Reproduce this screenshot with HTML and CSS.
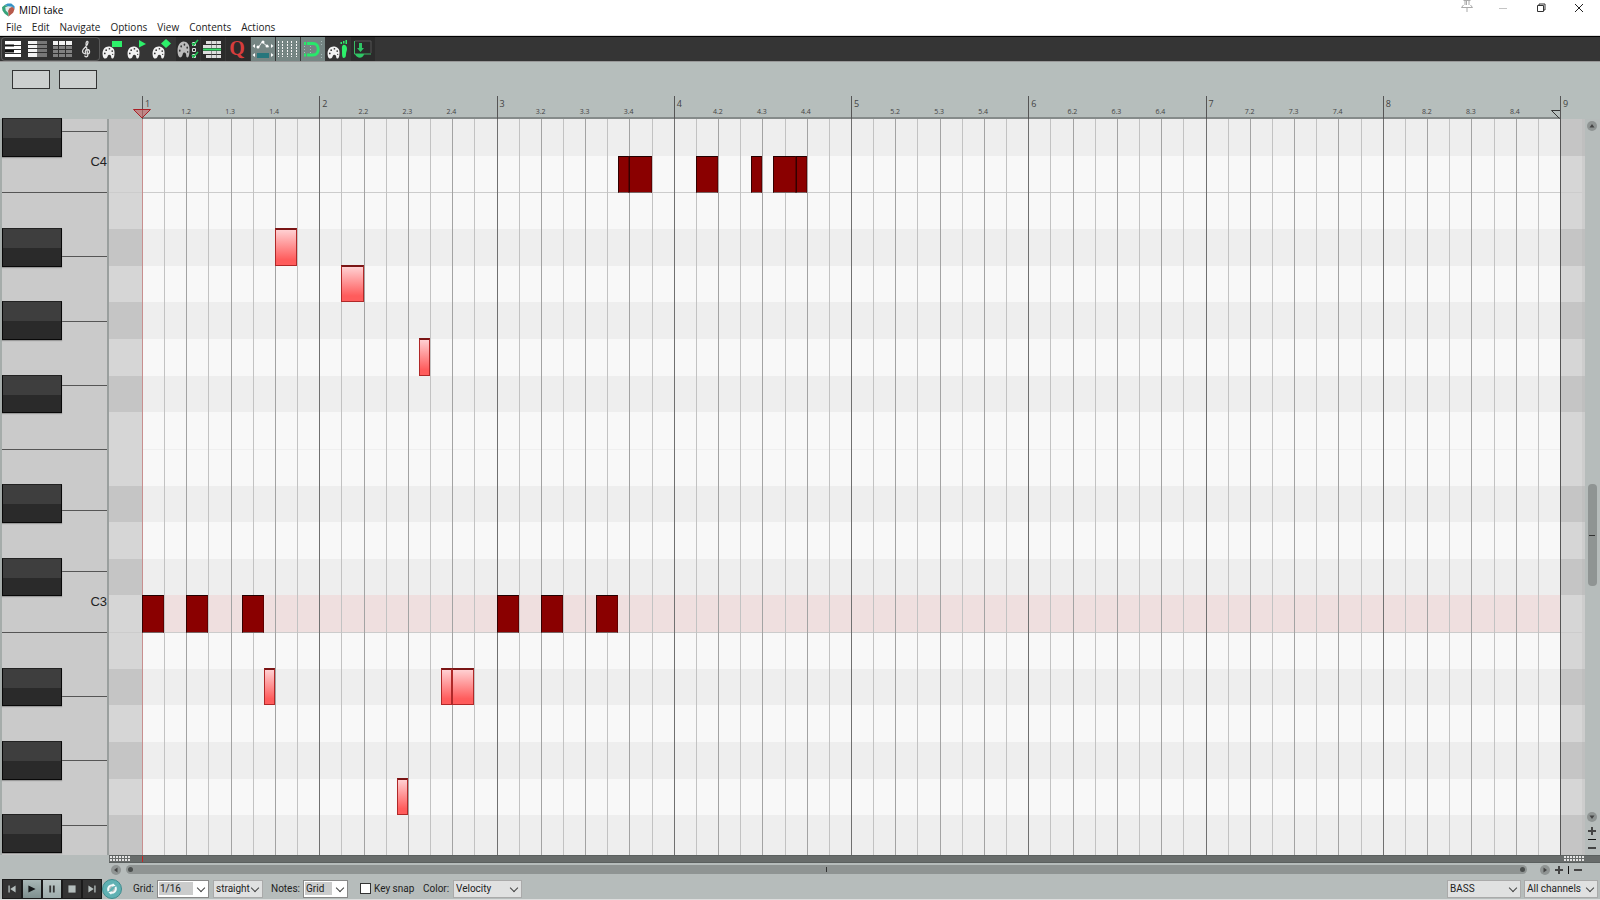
FILE: index.html
```html
<!DOCTYPE html>
<html lang="en">
<head>
<meta charset="utf-8">
<title>MIDI take</title>
<link rel="stylesheet" href="styles.css">
</head>
<body>
<div class="app">
  <header class="titlebar">
    <svg class="logo" viewBox="0 0 14 14"><path d="M.5 3.500L4 .5h6l3.500 3.500-1 5L7 14 2 10z" fill="#dfe9ea"/><path d="M3 1.500L6 0h4l3.500 3v3L11 3.500 6.500 3z" fill="#3593c6"/><path d="M3 1.500L0 4l.5 3.500L3 11l4 3V10.500L4 7.500 3.500 4 6.500 3z" fill="#36a37a"/><path d="M8 5l3-1.500L13.500 6l-1.500 4L7 14v-3.500L6.500 8z" fill="#b75a4c"/></svg>
    <h1 class="title">MIDI take</h1>
    <div class="window-buttons">
      <button class="win-btn pin" aria-label="Pin"><svg width="14" height="14" viewBox="0 0 14 14" fill="none" stroke="#a9a9a9"><path d="M3.500.5h7M5 1v4M6.500 1v4M9 1v4M3.500 5L1.500 7.500h11L10.500 5M7 8v4"/></svg></button>
      <button class="win-btn" aria-label="Minimize"><svg width="10" height="10" viewBox="0 0 10 10" stroke="#c4c4c4"><path d="M1 5.500h8"/></svg></button>
      <button class="win-btn" aria-label="Restore"><svg width="10" height="10" viewBox="0 0 10 10" fill="none" stroke="#333"><path d="M1.500 2.500h6v6h-6zM3 2.500V1h6v6H7.500"/></svg></button>
      <button class="win-btn" aria-label="Close"><svg width="10" height="10" viewBox="0 0 10 10" stroke="#222"><path d="M1 1l8 8M9 1l-8 8"/></svg></button>
    </div>
  </header>
  <nav class="menubar">
    <button>File</button><button>Edit</button><button>Navigate</button><button>Options</button><button>View</button><button>Contents</button><button>Actions</button>
  </nav>

  <svg class="defs" width="0" height="0">
    <symbol id="palette" viewBox="0 0 14 14" preserveAspectRatio="none"><path d="M7 .5C11 .5 13.700 3 13.500 7c0 3-.4 6.500-2.300 6.500-1.700 0-.9-2-1.700-3.200-.9-1.300-2.600-1.100-3.200.2-.5 1.200-.6 3-3 3C1.300 13.500.5 10 .6 7.500.8 3.500 3.500.5 7 .5z" fill="currentColor"/><g fill="#333"><circle cx="3" cy="8" r=".9"/><circle cx="4.500" cy="4.500" r=".9"/><circle cx="8" cy="3" r=".9"/><circle cx="11" cy="5.500" r=".9"/><circle cx="11.500" cy="9" r=".7"/></g></symbol>
  </svg>

  <div class="toolbar" role="toolbar" aria-label="Editor tools">
    <div class="tool-group">
      <button class="tool" aria-label="Piano roll view"><svg viewBox="0 0 24 24"><path fill="#fff" d="M4 4h16v16H4z"/><path stroke="#333" d="M4 8.500h16M4 12.500h16M4 16.500h16"/><path fill="#111" d="M4 7.500h9v2H4zM4 13h9v2.500H4z"/></svg></button>
      <button class="tool" aria-label="Named notes view"><svg viewBox="0 0 24 24"><path fill="#f2f2f2" d="M2 4h9v3H2zM2 8h9v3H2zM2 12h9v3H2zM2 16h9v4H2z"/><path fill="#777" d="M11 4h10v3H11zM11 8h10v3H11zM11 12h10v3H11zM11 16h10v4H11z"/></svg></button>
      <button class="tool" aria-label="Event list view"><svg viewBox="0 0 24 24"><path fill="#f2f2f2" d="M2 4h5v4H2zM8 4h6v4H8zM15 4h6v4h-6z"/><path fill="#818181" d="M2 9h5v3H2zM8 9h6v3H8zM15 9h6v3h-6zM2 13h5v3H2zM8 13h6v3H8zM15 13h6v3h-6zM2 17h5v3H2zM8 17h6v3H8zM15 17h6v3h-6z"/></svg></button>
      <button class="tool" aria-label="Notation view"><svg viewBox="0 0 24 24" fill="none" stroke="#ddd" stroke-width="1.300"><path d="M10.500 17c-3 0-4-1.500-4-3 0-3 5.500-4.500 5.500-8.500 0-2-2-1.500-2 1.500l1.800 11c.2 2-3 2.500-3 .5M10.500 16.500c-2-.5-1.500-4 .8-4 3 0 3 4.500 0 4.500"/></svg></button>
    </div>
    <button class="tool" aria-label="Color by velocity"><svg viewBox="0 0 24 24"><use href="#palette" x="1" y="9" width="13" height="13"/><path fill="#2df06a" d="M11 4h10v6H11z"/></svg></button>
    <button class="tool" aria-label="Color by channel"><svg viewBox="0 0 24 24"><use href="#palette" x="1" y="9" width="13" height="13"/><path fill="#2df06a" d="M13 3l7 4-7 3.500z"/></svg></button>
    <button class="tool" aria-label="Color by pitch"><svg viewBox="0 0 24 24"><use href="#palette" x="1" y="9" width="13" height="13"/><path fill="#2df06a" d="M15 2l5 4.500L15 11l-5-4.500z"/></svg></button>
    <button class="tool dark" aria-label="Color options"><svg viewBox="0 0 24 24" color="#bbb"><use href="#palette" x="1" y="4" width="13" height="17"/><g fill="none" stroke="#ddd"><path d="M16.500 5.500h3v3h-3zM16.500 11.500h3v3h-3zM16.500 17.500h3v3h-3z"/><path stroke="#22c855" stroke-width="1.600" d="M16 6l1.500 2L22 3M16 18l1.500 2L22 15"/></g></svg></button>
    <button class="tool dark" aria-label="Grid lines"><svg viewBox="0 0 24 24"><path fill="#ddd" d="M5 4h15v3H5zM2 8h18v3H2zM2 14h18v3H2zM5 18h15v3H5z"/><path fill="#37dc69" d="M2 11.500h18v2H2z"/><path d="M10.500 4v7M15.500 4v7M10.500 14v7M15.500 14v7" stroke="#555" stroke-width=".6"/></svg></button>
    <button class="tool dark quantize" aria-label="Quantize">Q</button>
    <button class="tool active" aria-label="CC lanes"><svg viewBox="0 0 24 24" fill="none"><path d="M7 11l4-6 5 4 2 1" stroke="#eee" stroke-width="1"/><g fill="#fff"><circle cx="7" cy="10" r="1.500"/><circle cx="12" cy="5" r="1.500"/><circle cx="16" cy="9" r="1.500"/><path d="M4 7v4L1.500 9zM20 7v4l2.500-2zM4 16v4l-2.500-2zM20 16v4l2.500-2z"/></g><path fill="#26767c" d="M6 16h12v5H6z"/></svg></button>
    <button class="tool active" aria-label="Show grid"><svg viewBox="0 0 24 24" stroke="#f4f4f4"><path d="M2.500 4v16M6.500 4v16M11.500 4v16M15.500 4v16M20.500 4v16" stroke-dasharray="2 1"/></svg></button>
    <button class="tool active" aria-label="Snap to grid"><svg viewBox="0 0 24 24" fill="none"><path d="M3.500 9v7M20.500 4v4M20.500 17v4M9.500 9v7" stroke="#a9bbb9" stroke-dasharray="1 2"/><path d="M6 6.500h6c7 0 7 11.500 0 11.500H6M3 6.500h2M3 18h2" stroke="#28e86b" stroke-width="3"/></svg></button>
    <button class="tool" aria-label="Step input"><svg viewBox="0 0 24 24"><use href="#palette" x="1" y="9" width="13" height="13"/><path fill="#2df06a" d="M17 8c3-1 4 2 4 4 0 2-1 3-1 5 0 3-1 4-2.500 4s-1.500-4-1.500-7c0-3-.5-5 1-6zM14.500 5h1.500v2h-1.500zM17 4h1.500v2.500H17zM19.500 3H21v4h-1.500z"/></svg></button>
    <button class="tool dark" aria-label="Dock editor"><svg viewBox="0 0 24 24" fill="none"><path d="M4 4h16v12" stroke="#555"/><path d="M3.500 4v13H20" stroke="#39bc65"/><path fill="#2ec765" d="M8 6h3v5h2l-3.500 4L6 11h2zM4 17h9c-1 5-7 5-9 0z"/></svg></button>
  </div>

  <section class="timeline-head">
    <div class="status-boxes"><input aria-label="Event position" readonly><input aria-label="Event value" readonly></div>
    <div class="ruler" id="ruler">
      <svg class="start-mark" width="18" height="10" viewBox="0 0 18 10"><path d="M.5.5h17L9 9z" fill="#c46a6a" fill-opacity=".65" stroke="#a92026"/></svg>
      <svg class="end-mark" width="9" height="9" viewBox="0 0 9 9" fill="none" stroke="#333"><path d="M9 .5H.5l8 8"/></svg>
    </div>
  </section>

  <main class="editor">
    <div class="piano" id="piano"></div>
    <div class="roll">
      <div class="rows" id="rows"></div>
      <div class="lines" id="lines"></div>
      <div class="notes" id="notes"></div>
    </div>
    <div class="vscroll">
      <button class="round" aria-label="Scroll up"><svg viewBox="0 0 10 10"><path d="M2.500 6.500h5L5 3z"/></svg></button>
      <div class="vtrack"><div class="vthumb"></div></div>
      <button class="round down" aria-label="Scroll down"><svg viewBox="0 0 10 10"><path d="M2.500 3.500h5L5 7z"/></svg></button>
      <button class="zoom" aria-label="Zoom in vertically"><svg viewBox="0 0 8 8"><path d="M4 0v8M0 4h8"/></svg></button>
      <div class="vtick"></div>
      <button class="zoom" aria-label="Zoom out vertically"><svg viewBox="0 0 8 8"><path d="M0 4h8"/></svg></button>
    </div>
  </main>

  <div class="divider"><span class="grip"></span><span class="play-line"></span><span class="grip end"></span></div>

  <div class="hscroll">
    <button class="round" aria-label="Scroll left"><svg viewBox="0 0 10 10"><path d="M6.500 2.500v5L3 5z"/></svg></button>
    <div class="hthumb"><span></span></div>
    <button class="round" aria-label="Scroll right"><svg viewBox="0 0 10 10"><path d="M3.500 2.500v5L7 5z"/></svg></button>
    <button class="zoom" aria-label="Zoom in horizontally"><svg viewBox="0 0 8 8"><path d="M4 0v8M0 4h8"/></svg></button>
    <div class="htick"></div>
    <button class="zoom" aria-label="Zoom out horizontally"><svg viewBox="0 0 8 8"><path d="M0 4h8"/></svg></button>
  </div>

  <footer class="controls">
    <div class="transport">
      <button aria-label="Go to start"><svg viewBox="0 0 20 20"><path d="M6 6v8h1.500V6zM14 6v8l-6-4z"/></svg></button>
      <button class="lit" aria-label="Play"><svg viewBox="0 0 20 20"><path fill="#16191a" d="M6 6l8 4-8 4z"/></svg></button>
      <button class="lit bright" aria-label="Pause"><svg viewBox="0 0 20 20"><path fill="#333" d="M7 6h2v8H7zM11 6h2v8h-2z"/></svg></button>
      <button aria-label="Stop"><svg viewBox="0 0 20 20"><path d="M6 6h8v8H6z"/></svg></button>
      <button aria-label="Go to end"><svg viewBox="0 0 20 20"><path d="M14 6v8h-1.500V6zM6 6v8l6-4z"/></svg></button>
      <button class="loop" aria-label="Repeat"><svg viewBox="0 0 20 20" fill="none" stroke="#f2fafa" stroke-width="2"><path d="M6 12.500C4.500 8 8 5 11.500 5.800M14 7.500c1.500 4.500-2 7.500-5.500 6.700"/><path d="M11 3.500l3 3-4 1zM9 16.500l-3-3 4-1z" fill="#f2fafa" stroke="none"/></svg></button>
    </div>
    <label class="grid-label" for="grid">Grid:</label>
    <span class="select editable grid-size"><select id="grid"><option>1/16</option></select></span>
    <span class="select grid-type"><select aria-label="Grid type"><option>straight</option></select></span>
    <label class="notes-label" for="note-len">Notes:</label>
    <span class="select editable note-len"><select id="note-len"><option>Grid</option></select></span>
    <label class="snap"><input type="checkbox">Key snap</label>
    <label class="color-label" for="color">Color:</label>
    <span class="select color"><select id="color"><option>Velocity</option></select></span>
    <span class="select track"><select aria-label="Track"><option>BASS</option></select></span>
    <span class="select channel"><select aria-label="Channel"><option>All channels</option></select></span>
  </footer>
</div>
<script src="editor.js"></script>
</body>
</html>
```
FILE: styles.css
```css
*, *::before, *::after { box-sizing: border-box; }
body { margin: 0; }
button, input, select { font: inherit; color: inherit; margin: 0; padding: 0; border: 0; border-radius: 0; background: none; }
svg { display: block; }

.app {
  --piano: 109px;
  --lead: 33px;
  --tail: 25px;
  --vscroll: 15px;
  display: flex;
  flex-direction: column;
  height: 100vh;
  background: #b6bcbb;
  font: 10px/14px "Open Sans", "Noto Sans", sans-serif;
  color: #222;
  overflow: hidden;
}
.defs { position: absolute; }

.titlebar { display: flex; align-items: center; gap: 4px; height: 19px; padding-left: 2px; background: #fff; }
.logo { width: 13px; height: 14px; }
.title { margin: 0; font-size: 10px; font-weight: 400; color: #000; }
.window-buttons { display: flex; margin-left: auto; padding: 0 2px 3px 0; }
.win-btn { display: grid; place-items: center; width: 38px; height: 16px; }
.win-btn.pin { width: 34px; padding-bottom: 4px; }

.menubar { display: flex; gap: 10px; height: 17px; padding-left: 6px; background: #fff; border-bottom: 1px solid #ddd; }

.toolbar { display: flex; gap: 1px; height: 25px; padding-left: 1px; background: #353535; border-top: 1px solid #000; }
.tool-group { display: flex; gap: 1px; width: 99px; border-radius: 4px; overflow: hidden; background: #303030; box-shadow: inset 0 0 0 1px #5a5a5a; }
.tool { flex: none; width: 24px; height: 24px; color: #f2f2f2; }
.tool svg { width: 24px; height: 24px; }
.tool.dark { background: #2b2b2b; }
.tool.active { background: #758583; }
.tool.quantize { color: #d63d3d; font: 700 20px/20px "Liberation Serif", serif; padding: 0 2px 2px 0; }

.timeline-head { display: flex; flex-direction: column; justify-content: space-between; height: 58px; border-top: 1px solid #999; background: #b6bebc; }
.status-boxes { display: flex; gap: 9px; padding: 8px 0 0 12px; }
.status-boxes input { width: 38px; height: 19px; background: #cdd0cf; border: 1px solid #333; }
.ruler {
  position: relative;
  display: grid;
  grid-template-columns: repeat(8, 1fr) 0;
  height: 23px;
  margin-left: calc(var(--piano) + var(--lead));
  margin-right: calc(var(--vscroll) + var(--tail));
  border-bottom: 2px solid #858b8a;
  color: #444;
}
.bar { display: grid; grid-template-columns: repeat(4, 1fr); border-left: 1px solid #555; height: 23px; font-size: 9px; line-height: 16px; }
.bar b { font-weight: 400; padding-left: 2px; }
.bar small { font-size: 7px; line-height: 10px; padding-top: 11px; width: 20px; margin-left: -11px; text-align: center; }
.start-mark { position: absolute; left: -9px; bottom: -2px; }
.end-mark { position: absolute; right: 0; bottom: -2px; }

.editor { display: flex; flex: 1; min-height: 0; }
.piano {
  flex: none;
  width: var(--piano);
  display: grid;
  grid-template-rows: repeat(240, minmax(0, 1fr));
  grid-template-columns: 60px 1fr;
  padding-bottom: 3px;
  border-left: 2px solid #a5acaa;
  border-right: 2px solid #9a9f9e;
  background: #cacaca;
}
.white { grid-column: 1 / 3; display: flex; align-items: center; justify-content: flex-end; border-top: 1px solid #555; font: 13px/16px "Liberation Sans", Arial, sans-serif; color: #222; }
.white:first-child { border-top: 0; }
.black { grid-column: 1; margin: -1px 0; border: 1px solid #080808; border-top-color: #222; background: linear-gradient(#3e3e3e 52%, #2a2a2a 52%); box-shadow: 0 1px 1px #999; }

.roll { position: relative; flex: 1; min-width: 0; background: #f8f8f8; }
.rows, .lines, .notes { position: absolute; inset: 0; }
.rows, .notes { display: grid; grid-template-rows: repeat(20, minmax(0, 1fr)); padding-bottom: 3px; }
.row { display: flex; justify-content: space-between; }
.row::before, .row::after { content: ""; width: var(--lead); background: #d6d6d6; }
.row::after { width: var(--tail); border-right: 3px solid #cdcdcd; }
.row.sharp { background: #eee; }
.row.sharp::before, .row.sharp::after { background: #c5c5c5; }
.row.sharp::after { border-color: #bfbfbf; }
.row.b { border-top: 1px solid #ccc; }
.row.e { background: linear-gradient(#efefef 1px, transparent 1px); }
.row.current { background: #efdfdf; }
.row:last-child { margin-bottom: -3px; }
.lines { left: var(--lead); right: var(--tail); margin-right: -1px; display: grid; grid-template-columns: repeat(64, minmax(0, 1fr)); border-right: 1px solid #555; }
.line { border-left: 1px solid #c2c2c2; }
.line.beat { border-color: #a3a3a3; }
.line.measure { border-color: #707070; }
.line.origin { border-left: 1px solid #c88f8f; }
.notes { left: var(--lead); right: var(--tail); grid-template-columns: repeat(128, minmax(0, 1fr)); }
.note { margin-bottom: -1px; border: 1px solid #600000; border-top-color: #200; border-left-color: #300; border-bottom-color: #766; background: #8a0000; }
.note.soft { margin: -1px 0 0; border: 1px solid #b02828; border-top: 2px solid #7a1515; background: linear-gradient(#ffd0d2, #ff5c5c 85%); }

.vscroll { flex: none; width: var(--vscroll); display: flex; flex-direction: column; align-items: center; gap: 4px; padding: 2px 1px 3px 0; }
.round { flex: none; width: 10px; height: 10px; border-radius: 50%; background: #8f9493; }
.round.down { margin-bottom: 1px; }
.round svg { fill: #444; }
.vtrack { flex: 1; width: 9px; display: grid; grid-template-rows: 349fr 102fr 222fr; }
.vthumb { grid-row: 2; display: flex; align-items: center; border-radius: 4px; background: #8f9493; }
.vthumb::before { content: ""; width: 6px; height: 1px; margin: 0 auto; background: #333; }
.zoom { flex: none; width: 8px; height: 8px; }
.zoom svg { stroke: #444; stroke-width: 2; }
.vtick { width: 8px; height: 1px; background: #111; }

.divider { flex: none; display: flex; height: 8px; margin-left: var(--piano); background: #686c6b; border: 1px solid #5b605f; border-width: 1px 0; }
.grip { width: 21px; height: 5px; margin-left: 1px; background: linear-gradient(transparent 2px, #686c6b 2px 3px, transparent 3px), repeating-linear-gradient(90deg, #e4e4e4 0 2px, transparent 2px 3px); }
.play-line { width: 1px; margin-left: 11px; background: #c22; }
.grip.end { margin-left: auto; margin-right: 15px; }

.hscroll { flex: none; display: flex; align-items: center; gap: 5px; height: 14px; padding: 0 18px 1px 111px; }
.hthumb { flex: 1; display: flex; align-items: center; justify-content: space-between; height: 9px; padding: 0 2px; margin-right: 8px; border-radius: 5px; background: #8f9493; }
.hthumb::before, .hthumb::after { content: ""; width: 5px; height: 5px; border-radius: 50%; background: #4b4f4e; }
.hthumb span { width: 1px; height: 5px; background: #333; }
.htick { width: 1px; height: 8px; background: #111; }

.controls { flex: none; display: flex; align-items: center; height: 23px; padding: 1px 2px 0 2px; font: 10px/14px Roboto, "Open Sans", sans-serif; border-bottom: 1px solid #ddd; }
.transport { display: flex; width: 131px; }
.transport button { width: 20px; height: 20px; border: 1px solid #1a1a1a; background: #333; }
.transport svg { width: 18px; height: 18px; fill: #b4bdbc; }
.transport .lit { background: linear-gradient(#a8b7b6, #7e908f); }
.transport .bright { background: linear-gradient(#bac5c4, #9eadac); }
.transport .loop { border: 1px solid #3f8c8e; border-radius: 50%; background: #5fb1b3; }
.select { position: relative; display: flex; height: 18px; border: 1px solid #aaa; background: #e0e1e1; }
.select select { appearance: none; flex: 1; width: 100%; padding: 0 12px 0 2px; }
.select::after { content: ""; position: absolute; right: 4px; top: 4px; width: 6px; height: 6px; border: solid #444; border-width: 0 1px 1px 0; transform: rotate(45deg); pointer-events: none; }
.editable { background: #fff; border-color: #888; }
.editable select { margin: 1px; padding-left: 1px; background: linear-gradient(#cbcccc, #cbcccc) 0 0 / calc(100% - 14px) 13px no-repeat; }
.grid-label { width: 24px; }
.grid-size { width: 52px; margin-right: 4px; }
.grid-type { width: 50px; margin-right: 8px; }
.notes-label { width: 32px; }
.note-len { width: 45px; margin-right: 12px; }
.snap { display: flex; align-items: center; gap: 3px; width: 63px; white-space: nowrap; }
.snap input { appearance: none; width: 11px; height: 11px; border: 1px solid #333; background: #fff; }
.color-label { width: 30px; }
.color { width: 69px; }
.track { width: 74px; margin-left: auto; }
.channel { width: 74px; margin-left: 3px; }
```
FILE: editor.js
```js
const add = (parent, cls, style, tag = "div") => {
  const el = document.createElement(tag);
  el.className = cls;
  Object.assign(el.style, style);
  parent.append(el);
  return el;
};
const byId = id => document.getElementById(id);

// Rows from C#4 at the top down to F#2.
const names = ["C#", "C", "B", "A#", "A", "G#", "G", "F#", "F", "E", "D#", "D"];
const rowCount = 20;
const currentRow = 13;

for (let r = 0; r < rowCount; r++) {
  const n = names[r % 12];
  const kind = n.length > 1 ? "sharp" : n.toLowerCase();
  add(byId("rows"), `row ${kind}${r === currentRow ? " current" : ""}`);
}

// White keys, measured in twelfths of a row.
const piano = byId("piano");
const whites = [[4], [20, "C4"], [21], [21], [21], [21], [20], [20], [20, "C3"], [21], [21], [21], [9]];
let at = 1;
whites.forEach(([size, label]) => {
  const key = add(piano, "white", { gridRow: `${at} / span ${size}` });
  if (label) key.textContent = label;
  at += size;
});
for (let r = 0; r < rowCount; r++) {
  if (names[r % 12].length > 1) add(piano, "black", { gridRow: `${r * 12 + 1} / span 12` });
}

const ruler = byId("ruler");
for (let b = 1; b <= 9; b++) {
  const bar = add(ruler, "bar");
  add(bar, "", {}, "b").textContent = b;
  if (b < 9) for (let q = 2; q <= 4; q++) add(bar, "", {}, "small").textContent = `${b}.${q}`;
}

for (let i = 0; i < 64; i++) {
  add(byId("lines"), "line" + (i === 0 ? " origin" : i % 8 === 0 ? " measure" : i % 2 === 0 ? " beat" : ""));
}

// [row, start, length] in half grid steps.
const hard = [[1, 43, 1], [1, 44, 2], [1, 50, 2], [1, 55, 1], [1, 57, 2], [1, 59, 1],
  [13, 0, 2], [13, 4, 2], [13, 9, 2], [13, 32, 2], [13, 36, 2], [13, 41, 2]];
const soft = [[3, 12, 2], [4, 18, 2], [6, 25, 1], [15, 11, 1], [15, 27, 1], [15, 28, 2], [18, 23, 1]];
const place = (list, cls) => list.forEach(([row, start, len]) =>
  add(byId("notes"), cls, { gridRow: row + 1, gridColumn: `${start + 1} / span ${len}` }));
place(hard, "note");
place(soft, "note soft");
```
